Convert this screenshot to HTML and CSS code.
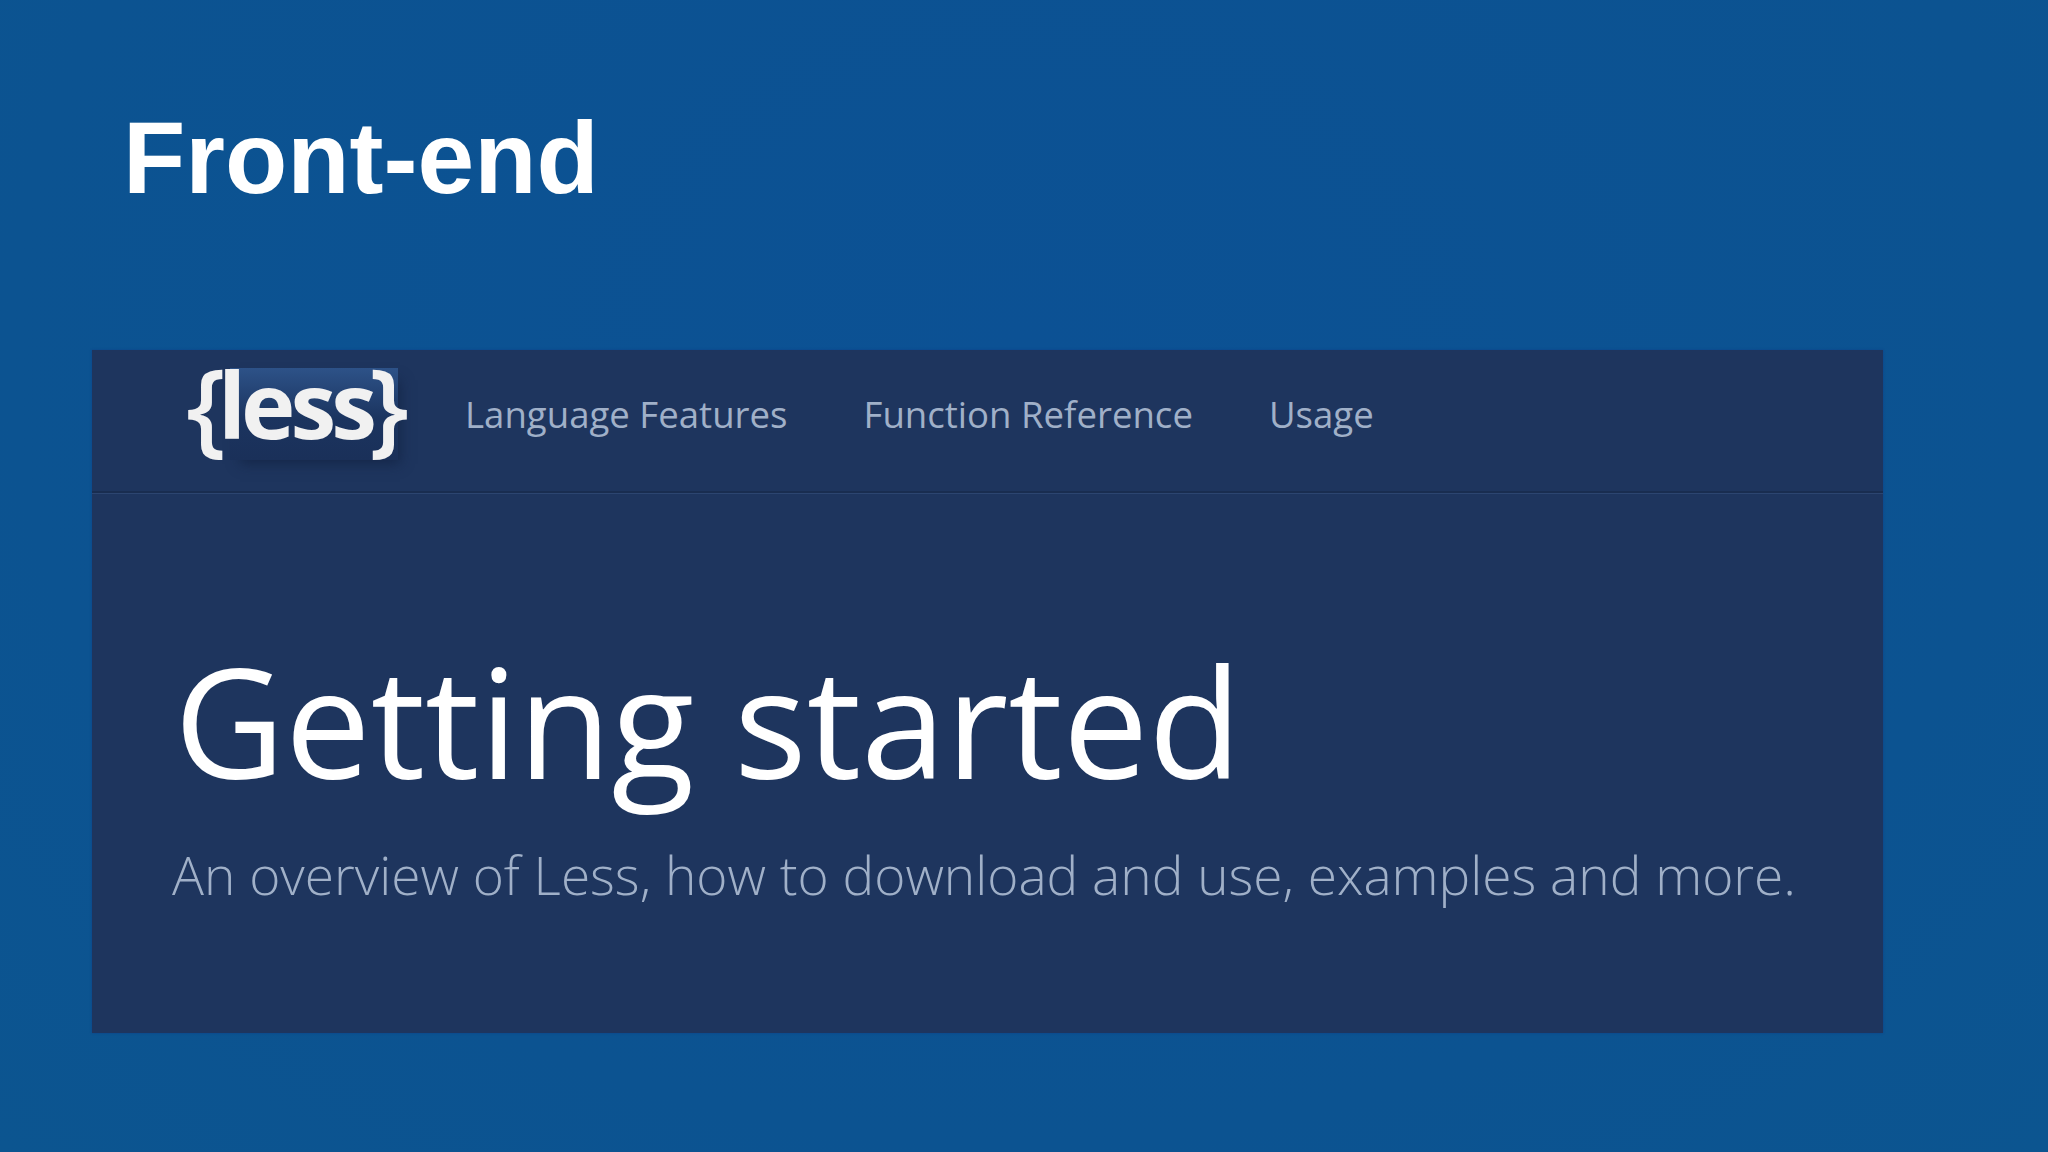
FILE: index.html
```html
<!DOCTYPE html>
<html lang="en">
<head>
    <meta charset="UTF-8">
    <meta name="viewport" content="width=device-width, initial-scale=1.0">
    <title>Front-end</title>
    <link rel="stylesheet" href="styles.css">
</head>
<body>
    <h1 class="slide-title">Front-end</h1>
    <div class="panel">
        <div class="navbar">
            <div class="logo">
                <span class="logo-brace logo-brace-left">{</span>
                <span class="logo-text">less</span>
                <span class="logo-brace logo-brace-right">}</span>
            </div>
            <a class="nav-link" href="#">Language Features</a>
            <a class="nav-link" href="#">Function Reference</a>
            <a class="nav-link" href="#">Usage</a>
        </div>
        <div class="hero">
            <div class="hero-title">Getting started</div>
            <p class="hero-lead">An overview of Less, how to download and use, examples and more.</p>
        </div>
    </div>
</body>
</html>
```

FILE: styles.css
```css
body {
    background: radial-gradient(ellipse at 50% 30%, #0c5194 0%, #0c5391 70%, #0c5590 100%);
    font-family: "Open Sans", sans-serif;
    margin: 0;
    padding: 0;
    height: 1152px;
    overflow: hidden;
}
.slide-title {
    font-family: "Liberation Sans", Arial, sans-serif;
    font-size: 102px;
    font-weight: bold;
    line-height: 116px;
    color: #fff;
    margin: 0;
    padding: 100px 0 0 123px;
}
.panel {
    background-color: #1e355e;
    margin: 134px 0 0 92px;
    width: 1791px;
    height: 683px;
    box-shadow: 0 0 2px rgba(20, 50, 130, 0.6);
}
.navbar {
    display: flex;
    align-items: center;
    height: 143px;
    padding: 0 0 14px 94px;
    box-sizing: border-box;
    border-bottom: 2px solid #192d50;
    box-shadow: 0 1px 0 #2c4570;
}
.logo {
    position: relative;
    display: flex;
    align-items: center;
    flex: none;
    width: 222px;
    height: 92px;
    margin-right: 57px;
    color: #f1f1f1;
}
.logo::before {
    content: "";
    position: absolute;
    top: 0;
    bottom: 0;
    left: 44px;
    right: 10px;
    background: linear-gradient(#2d5288, #1b345f 55%, #1a3059);
    box-shadow: 6px 8px 12px -4px rgba(15, 30, 60, 0.6);
}
.logo-brace {
    position: relative;
    font-size: 104px;
    font-weight: 600;
    line-height: 92px;
    margin-top: -20px;
}
.logo-brace-left {
    margin-right: -8px;
}
.logo-brace-right {
    margin-left: -3px;
}
.logo-text {
    position: relative;
    font-size: 92px;
    font-weight: 700;
    line-height: 92px;
    letter-spacing: -5px;
    margin-top: -20px;
}
.nav-link {
    font-size: 36.6px;
    color: #a0b0c8;
    text-decoration: none;
    margin-right: 76px;
}
.hero {
    padding: 142px 0 0 80px;
}
.hero-title {
    font-size: 152.6px;
    font-weight: 400;
    line-height: 170px;
    margin-left: 2px;
    color: #fff;
}
.hero-lead {
    font-size: 53.2px;
    font-weight: 300;
    line-height: 70px;
    color: #a0b0c8;
    margin: 35px 0 0 0;
}
```
